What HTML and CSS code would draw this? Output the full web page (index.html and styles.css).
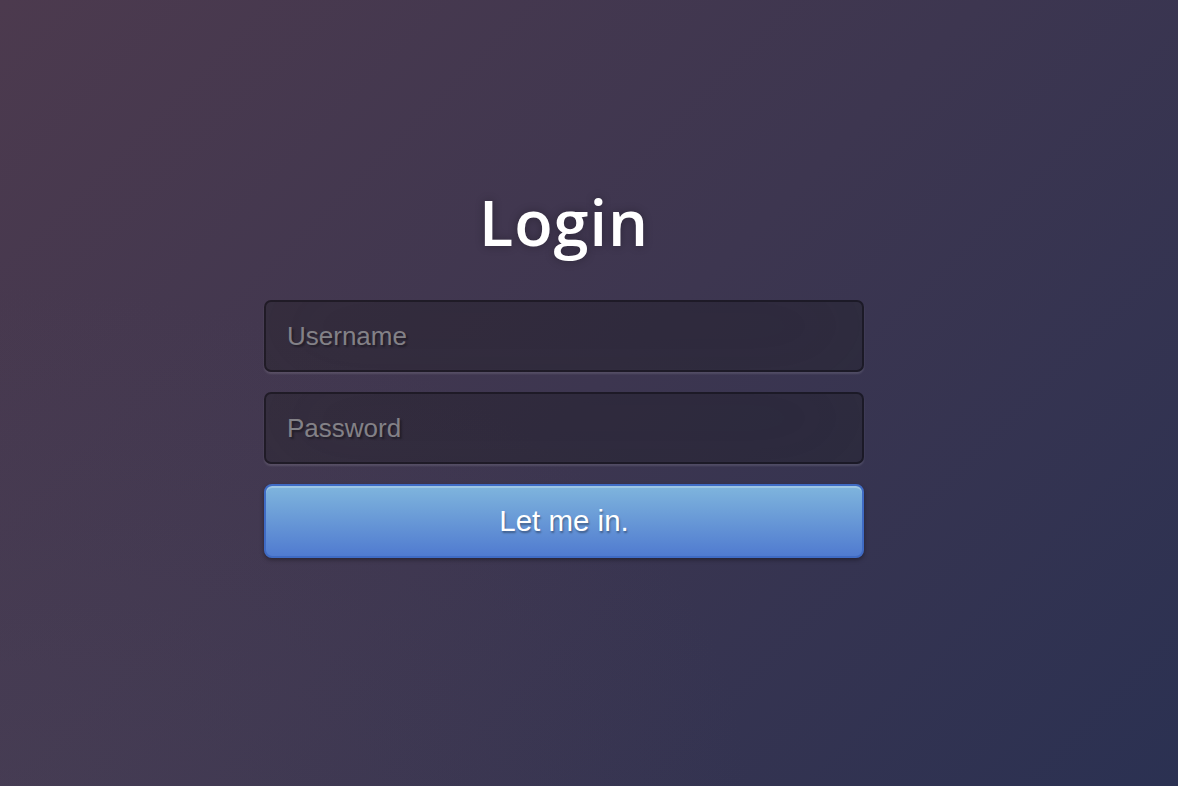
FILE: index.html
```html
<!DOCTYPE html>
<html lang="en">
<head>
  <meta charset="UTF-8">
  <meta name="viewport" content="width=device-width, initial-scale=1.0">
  <title>Login</title>
  <link rel="stylesheet" href="styles.css">
</head>
<body>
  <div id="login">
    <h1 id="title">Login</h1>
    <form id="login-form">
      <input type="text" name="u" placeholder="Username" required>
      <input type="password" name="p" placeholder="Password" required>
      <button type="submit" id="submit-button">Let me in.</button>
    </form>
  </div>
</body>
</html>
```

FILE: styles.css
```css
html {
  height: 100%;
}

body {
  height: 100%;
  margin: 0;
  box-sizing: border-box;
  padding: 184px 50px 0 0;
  display: flex;
  justify-content: center;
  align-items: flex-start;
  font-family: "Liberation Sans", Arial, sans-serif;
  background:
    radial-gradient(ellipse at 0% 100%, rgba(80, 70, 90, 0.35) 0%, rgba(80, 70, 90, 0) 45%),
    linear-gradient(135deg, #4c3a4e 0%, #3d3650 50%, #2b3152 100%);
}

#login {
  width: 600px;
}

#title {
  margin: 0 0 40px;
  text-align: center;
  color: #fff;
  font-family: "Open Sans", sans-serif;
  font-weight: 600;
  font-size: 63px;
  line-height: 76px;
  letter-spacing: 1px;
  text-shadow: 0 0 10px rgba(0, 0, 0, 0.3);
}

#login-form {
  display: flex;
  flex-direction: column;
  gap: 20px;
}

#login-form input {
  box-sizing: border-box;
  width: 100%;
  height: 72px;
  margin: 0;
  padding: 0 21px;
  font-family: "Liberation Sans", Arial, sans-serif;
  font-size: 26px;
  color: #fff;
  background: rgba(0, 0, 0, 0.25);
  border: 2px solid rgba(0, 0, 0, 0.35);
  border-radius: 7px;
  outline: none;
  text-shadow: 2px 2px 2px rgba(0, 0, 0, 0.35);
  box-shadow: inset 0 -10px 90px rgba(100, 100, 100, 0.1), 0 2px 2px rgba(255, 255, 255, 0.12);
}

#login-form input::placeholder {
  color: #838187;
}

#submit-button {
  height: 74px;
  margin-top: 0;
  font-family: "Liberation Sans", Arial, sans-serif;
  font-size: 29.5px;
  color: #fff;
  text-shadow: 1px 2px 2px rgba(0, 0, 0, 0.35);
  background: linear-gradient(to bottom, #7fb5dd 0%, #507bd0 100%);
  border: 2px solid #3f6bc4;
  border-radius: 8px;
  box-shadow: inset 0 2px 0 rgba(255, 255, 255, 0.25), 0 2px 4px rgba(0, 0, 0, 0.35);
  cursor: pointer;
}
```
